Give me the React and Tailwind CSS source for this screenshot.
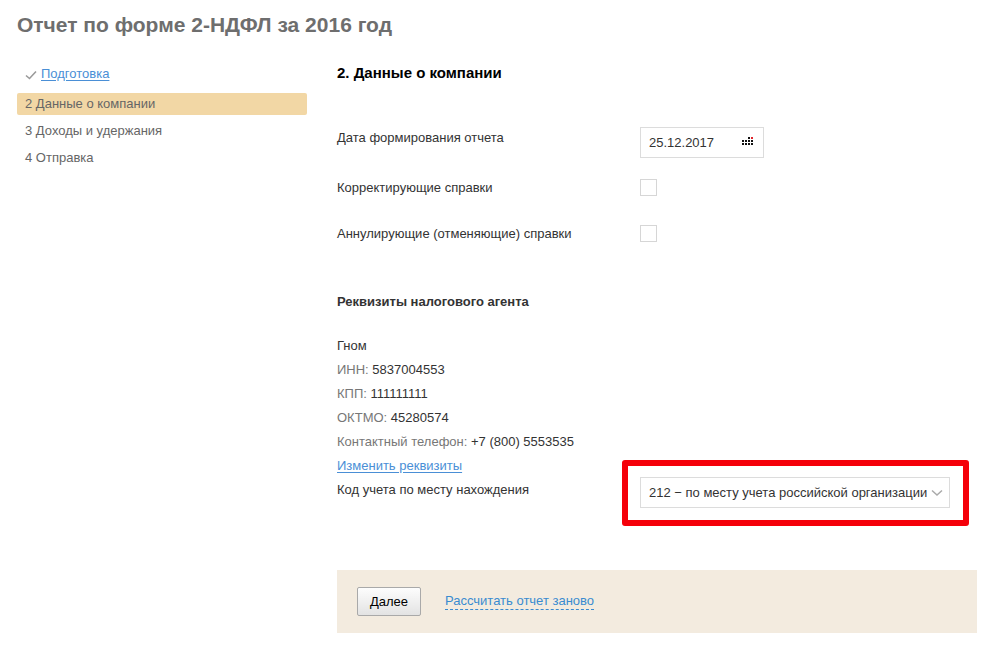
import React from "react";

const CalendarDots = () => {
  const cells = [];
  for (let r = 0; r < 3; r++) {
    for (let c = 0; c < 4; c++) {
      if (r === 0 && c < 2) continue;
      const red = r === 0 && c === 3;
      cells.push(
        <rect key={`${r}-${c}`} x={c * 3} y={r * 3} width="2" height="2" fill={red ? "#e0232a" : "#111"} />
      );
    }
  }
  return (
    <svg width="11" height="8" viewBox="0 0 11 8">
      {cells}
    </svg>
  );
};

const Row = ({ label, children, className = "" }) => (
  <div className={`flex items-start ${className}`}>
    <div className="w-[303px] shrink-0">{label}</div>
    <div>{children}</div>
  </div>
);

const Checkbox = () => <div className="w-[17px] h-[17px] border border-[#d6d6d6] bg-white" />;

const App = () => {
  return (
    <div className="min-h-screen bg-white font-['Liberation_Sans',Arial,sans-serif] text-[13px] text-[#333]">
      <h1 className="pl-[17px] pt-[11px] text-[21px] font-bold text-[#6e6e6e] leading-[28px]">
        Отчет по форме 2-НДФЛ за 2016 год
      </h1>

      <div className="flex mt-[23px]">
        {/* Left nav */}
        <div className="w-[290px] ml-[17px] mt-[1px] shrink-0">
          <div className="flex items-center h-[21px] pl-[8px] text-[#555]">
            <svg width="12" height="10" viewBox="0 0 12 10" className="mr-[4px] mt-[2px]">
              <path d="M1 5.5 L4.5 8.5 L11 1.5" fill="none" stroke="#9a9a9a" strokeWidth="1.6" />
            </svg>
            <a href="#" className="text-[#4a8fd6] underline underline-offset-2">Подготовка</a>
          </div>
          <div className="mt-[9px] h-[22px] flex items-center pl-[8px] bg-[#f2d7a5] rounded-[2px] text-[#666]">
            2&nbsp;Данные о компании
          </div>
          <div className="h-[27px] flex items-center pl-[8px] text-[#666] mt-[2px]">3&nbsp;Доходы и удержания</div>
          <div className="h-[27px] flex items-center pl-[8px] text-[#666]">4&nbsp;Отправка</div>
        </div>

        {/* Main */}
        <div className="ml-[30px] w-[640px]">
          <h2 className="text-[15px] font-bold text-black leading-[20px] h-[21px] flex items-center">
            2. Данные о компании
          </h2>

          <Row className="mt-[44px]" label={<div className="pt-[1px]">Дата формирования отчета</div>}>
            <div className="w-[124px] h-[31px] border border-[#dcdcdc] flex items-center justify-between pl-[8px] pr-[10px] text-[#333]">
              <span>25.12.2017</span>
              <span className="mb-[3px]"><CalendarDots /></span>
            </div>
          </Row>

          <Row className="mt-[21px]" label={<div className="leading-[18px]">Корректирующие справки</div>}>
            <Checkbox />
          </Row>

          <Row className="mt-[28px]" label={<div className="leading-[18px]">Аннулирующие (отменяющие) справки</div>}>
            <Checkbox />
          </Row>

          <h3 className="mt-[50px] font-bold text-[13px] text-[#333] leading-[18px]">Реквизиты налогового агента</h3>

          <div className="mt-[23px] leading-[24px]">
            <div className="text-[#333]">Гном</div>
            <div><span className="text-[#777]">ИНН:</span> <span className="text-[#333]">5837004553</span></div>
            <div><span className="text-[#777]">КПП:</span> <span className="text-[#333]">111111111</span></div>
            <div><span className="text-[#777]">ОКТМО:</span> <span className="text-[#333]">45280574</span></div>
            <div><span className="text-[#777]">Контактный телефон:</span> <span className="text-[#333]">+7 (800) 5553535</span></div>
            <div><a href="#" className="text-[#4a8fd6] underline underline-offset-2">Изменить реквизиты</a></div>
          </div>

          <Row className="-mt-[1px]" label={<div className="pt-[3px]">Код учета по месту нахождения</div>}>
            <div className="relative">
              <div className="absolute -left-[18px] -top-[17px] w-[347px] h-[66px] border-[6px] border-[#f5000a] rounded-[3px]" />
              <div className="relative w-[310px] h-[31px] border border-[#dcdcdc] bg-white flex items-center pl-[8px] pr-[6px] justify-between">
                <span className="text-[#333] whitespace-nowrap">212 − по месту учета российской организации</span>
                <svg width="12" height="8" viewBox="0 0 12 8">
                  <path d="M1 1.5 L6 6 L11 1.5" fill="none" stroke="#aaa" strokeWidth="1.5" />
                </svg>
              </div>
            </div>
          </Row>

          <div className="mt-[62px] h-[63px] bg-[#f3ebdf] flex items-center pl-[20px]">
            <button className="w-[64px] h-[29px] border border-[#a9a9a9] rounded-[2px] bg-gradient-to-b from-[#fdfdfd] to-[#e3e3e3] text-[13px] text-black">
              Далее
            </button>
            <a href="#" className="ml-[24px] text-[#3a8bd0] border-b border-dashed border-[#3a8bd0] leading-[16px]">
              Рассчитать отчет заново
            </a>
          </div>
        </div>
      </div>
    </div>
  );
};

export default App;
